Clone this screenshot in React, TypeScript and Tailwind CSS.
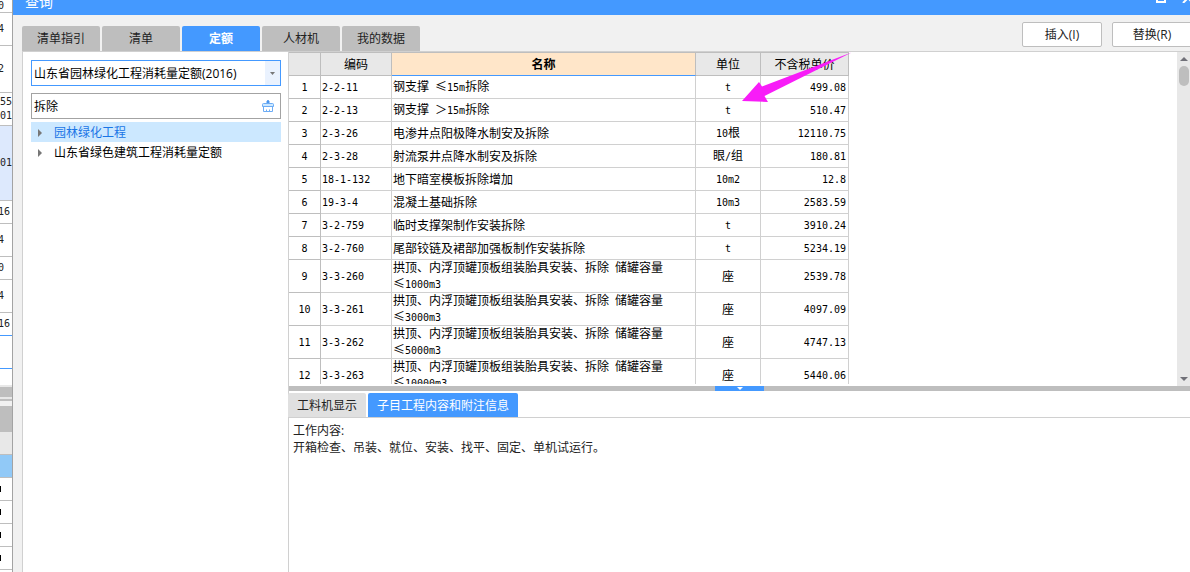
import React from "react";
import { clsx } from "clsx";

const tabs = ["清单指引", "清单", "定额", "人材机", "我的数据"];

const rows = [
  { code: "2-2-11", name: "钢支撑 ≤15m拆除", unit: "t", price: "499.08" },
  { code: "2-2-13", name: "钢支撑 ＞15m拆除", unit: "t", price: "510.47" },
  { code: "2-3-26", name: "电渗井点阳极降水制安及拆除", unit: "10根", price: "12110.75" },
  { code: "2-3-28", name: "射流泵井点降水制安及拆除", unit: "眼/组", price: "180.81" },
  { code: "18-1-132", name: "地下暗室模板拆除增加", unit: "10m2", price: "12.8" },
  { code: "19-3-4", name: "混凝土基础拆除", unit: "10m3", price: "2583.59" },
  { code: "3-2-759", name: "临时支撑架制作安装拆除", unit: "t", price: "3910.24" },
  { code: "3-2-760", name: "尾部铰链及裙部加强板制作安装拆除", unit: "t", price: "5234.19" },
  { code: "3-3-260", name: "拱顶、内浮顶罐顶板组装胎具安装、拆除 储罐容量", size: "≤1000m3", unit: "座", price: "2539.78" },
  { code: "3-3-261", name: "拱顶、内浮顶罐顶板组装胎具安装、拆除 储罐容量", size: "≤3000m3", unit: "座", price: "4097.09" },
  { code: "3-3-262", name: "拱顶、内浮顶罐顶板组装胎具安装、拆除 储罐容量", size: "≤5000m3", unit: "座", price: "4747.13" },
  { code: "3-3-263", name: "拱顶、内浮顶罐顶板组装胎具安装、拆除 储罐容量", size: "≤10000m3", unit: "座", price: "5440.06" },
];

// rows of the sheet behind the dialog, only their right edge shows
const sheetRows = [
  { text: "0", className: "h-[13px] border-[#bebebe] justify-end pr-2" },
  { text: "4", className: "h-[33px] border-[#bebebe] justify-end pr-2" },
  { text: "2", className: "h-[47px] border-[#bebebe] justify-end pr-2" },
  { text: "55\n010", className: "h-[33px] border-[#bebebe] justify-start" },
  { text: "01", className: "h-[75px] border-[#bebebe] justify-end bg-[#dde9fd]" },
  { text: "16", className: "h-[23px] border-[#bebebe] justify-end pr-0.5" },
  { text: "4", className: "h-[33px] border-[#bebebe] justify-end pr-2" },
  { text: "0", className: "h-[23px] border-[#bebebe] justify-end pr-2" },
  { text: "4", className: "h-[33px] border-[#bebebe] justify-end pr-2" },
  { text: "16", className: "h-[23px] border-[#4499ff] justify-end pr-0.5" },
  { text: "", className: "h-[33px] border-[#4499ff]" },
];

// half width characters take half the width of a Chinese one
const Mixed = ({ text }: { text: string }) => (
  <>
    {text.split(/([\x20-\x7e]+)/).map((part, i) =>
      i % 2 ? (
        <span key={i} className="font-['DejaVu_Sans_Mono',monospace] text-[10px] whitespace-pre">
          {part}
        </span>
      ) : (
        part
      )
    )}
  </>
);

const Sheet = () => (
  <aside className="w-[13px] shrink-0 overflow-hidden border-r border-[#a3a3a3] bg-white font-['DejaVu_Sans_Mono',monospace] text-[10px] leading-[14px] text-[#222]">
    {sheetRows.map((row, i) => (
      <div
        key={i}
        className={clsx("flex items-center overflow-hidden border-b whitespace-pre", row.className)}
      >
        {row.text}
      </div>
    ))}
    <div className="h-4" />
    <div className="h-0.5 bg-[#e8e8e8]" />
    <div className="h-2.5 bg-[#bebebe]" />
    <div className="h-0.5 bg-[#e8e8e8]" />
    <div className="h-0.5 bg-[#bebebe]" />
    <div className="h-[5px] bg-[#f1f1f1]" />
    <div className="h-[26px] bg-[#bebebe]" />
    <div className="h-[23px] border-b border-[#bebebe] bg-[#e8e8e8]" />
    <div className="h-[23px] border-b border-[#bebebe] bg-[#91c9f7]" />
    {[1, 2, 3, 4].map((n) => (
      <div key={n} className="flex h-[23px] items-center border-b border-[#bebebe]">
        <div className="h-1.5 w-px bg-black" />
      </div>
    ))}
  </aside>
);

const TitleBar = () => (
  <header className="flex h-[15px] shrink-0 items-end justify-between overflow-hidden bg-[#4499ff] pl-3 text-white">
    <h1 className="text-sm leading-[27px]">查询</h1>
    <div className="flex gap-4">
      <button aria-label="最大化" className="mb-3 h-2.5 w-2.5 shrink-0 border-2 border-white" />
      <button aria-label="关闭" className="-mr-1 mb-3 shrink-0">
        <svg width="12" height="10" viewBox="0 0 12 10" stroke="#fff" strokeWidth="2">
          <path d="M1 0l10 10M11 0L1 10" />
        </svg>
      </button>
    </div>
  </header>
);

const Toolbar = () => (
  <div className="flex h-9 shrink-0 items-end justify-between">
    <div role="tablist" className="flex gap-0.5">
      {tabs.map((tab) => (
        <button
          key={tab}
          role="tab"
          aria-selected={tab === "定额"}
          className={clsx(
            "h-[25px] w-[78px] rounded-t-xs whitespace-nowrap",
            tab === "定额" ? "bg-[#4499ff] font-bold text-white" : "bg-[#bebebe] text-[#222]"
          )}
        >
          {tab}
        </button>
      ))}
    </div>
    <div className="-mr-0.5 flex gap-2.5 pb-1">
      <button className="h-[25px] w-20 rounded-xs border border-[#bebebe] bg-white">插入(I)</button>
      <button className="h-[25px] w-20 rounded-xs border border-[#bebebe] bg-white">替换(R)</button>
    </div>
  </div>
);

const TreeItem = ({ label, selected }: { label: string; selected?: boolean }) => (
  <li>
    <button
      className={clsx(
        "flex h-5 w-full items-center gap-3 pt-px pl-[7px]",
        selected ? "bg-[#cce8ff] text-[#1a75e6]" : "text-black"
      )}
    >
      <svg width="4" height="8" viewBox="0 0 4 8" className="fill-[#777]">
        <path d="M0 0l4 4-4 4z" />
      </svg>
      {label}
    </button>
  </li>
);

const Sidebar = () => (
  <div className="w-[265px] shrink-0 px-2 pt-2">
    <div className="relative -mr-px">
      <select
        aria-label="定额库"
        className="block h-[26px] w-full appearance-none border border-[#4499ff] bg-white pt-px pl-0.5 text-black"
      >
        <option>山东省园林绿化工程消耗量定额(2016)</option>
      </select>
      <div className="pointer-events-none absolute inset-y-px right-px flex w-[15px] items-center justify-center bg-[#eaf2fe]">
        <svg width="5" height="3" viewBox="0 0 5 3" className="fill-[#777]">
          <path d="M0 0h5L2.5 3z" />
        </svg>
      </div>
    </div>
    <div className="mt-[7px] -mr-px flex h-[26px] items-center border border-[#a3a3a3] pr-1.5 pl-0.5">
      <input aria-label="搜索" defaultValue="拆除" className="min-w-0 flex-1 pt-px text-black outline-none" />
      <button aria-label="清空">
        <svg width="12" height="12" viewBox="0 0 12 12" fill="none" stroke="#4a96ee">
          <path d="M5 3.500v-2.500q1-1 2 0v2.500" fill="#4a96ee" />
          <path d="M.5 6.500v-2q0-1 1-1h9q1 0 1 1v2z" fill="#cce8ff" stroke="#6dacf5" />
          <path d="M1.500 6.500v5h9v-5M4.500 9.500v2M7.500 9.500v2" stroke="#6dacf5" />
        </svg>
      </button>
    </div>
    <ul className="-mr-px pt-[3px]">
      <TreeItem label="园林绿化工程" selected />
      <TreeItem label="山东省绿色建筑工程消耗量定额" />
    </ul>
  </div>
);

const QuotaTable = () => (
  <table className="w-[560px] table-fixed border-separate border-spacing-0 font-['Noto_Sans_CJK_SC',sans-serif] leading-[14px] text-black">
    <colgroup>
      <col className="w-8" />
      <col className="w-[71px]" />
      <col className="w-[304px]" />
      <col className="w-[65px]" />
      <col className="w-[88px]" />
    </colgroup>
    <thead>
      <tr className="h-6 bg-[#e8e8e8] *:border-t *:border-r *:border-b *:border-[#bebebe] *:p-0 *:font-normal">
        <th aria-label="序号" />
        <th>编码</th>
        <th className="border-b-[#4499ff]! bg-[#ffe6c9] font-bold!">名称</th>
        <th>单位</th>
        <th>不含税单价</th>
      </tr>
    </thead>
    <tbody>
      {rows.map((row, i) => (
        <tr
          key={row.code}
          className={clsx("*:border-r *:border-b *:border-[#d0d0d0] *:p-0", row.size ? "h-[33px]" : "h-[23px]")}
        >
          <td className="border-[#bebebe]! text-center">
            <Mixed text={String(i + 1)} />
          </td>
          <td className="pl-px!">
            <Mixed text={row.code} />
          </td>
          <td className="pl-px! whitespace-nowrap">
            <Mixed text={row.name} />
            {row.size && (
              <div>
                <Mixed text={row.size} />
              </div>
            )}
          </td>
          <td className="text-center">
            <Mixed text={row.unit} />
          </td>
          <td className="pr-0.5! text-right">
            <Mixed text={row.price} />
          </td>
        </tr>
      ))}
    </tbody>
  </table>
);

const ScrollBar = () => (
  <div className="flex w-[13px] shrink-0 flex-col items-center justify-between bg-[#e8e8e8] py-[5px]">
    <div className="flex flex-col items-center gap-[5px]">
      <svg width="8" height="4" viewBox="0 0 8 4" className="fill-[#707078]">
        <path d="M4 0l4 4H0z" />
      </svg>
      <div className="h-5 w-2.5 rounded-full bg-[#bebebe]" />
    </div>
    <svg width="8" height="4" viewBox="0 0 8 4" className="fill-[#707078]">
      <path d="M0 0h8L4 4z" />
    </svg>
  </div>
);

const Details = () => (
  <section className="flex min-h-0 flex-[181] flex-col">
    <div role="tablist" className="-ml-px flex gap-0.5 border-b border-[#d0d0d0] pt-0.5">
      <button role="tab" className="h-6 w-[78px] rounded-t-xs bg-[#e0e0e0] pt-px">
        工料机显示
      </button>
      <button role="tab" aria-selected className="h-6 w-[150px] rounded-t-xs bg-[#4499ff] pt-px text-white">
        子目工程内容和附注信息
      </button>
    </div>
    <div className="px-1 pt-1 leading-[17px]">
      <p>工作内容:</p>
      <p>开箱检查、吊装、就位、安装、找平、固定、单机试运行。</p>
    </div>
  </section>
);

const App = () => {
  return (
    <div className="flex h-screen overflow-hidden bg-[#f1f1f1] font-['Open_Sans','Noto_Sans_CJK_SC',sans-serif] text-xs text-[#222]">
      <Sheet />
      <div className="flex min-w-0 flex-1 flex-col">
        <TitleBar />
        <div className="flex min-h-0 flex-1 flex-col pl-[9px]">
          <Toolbar />
          <div className="flex min-h-0 flex-1 border-t border-l border-[#d0d0d0] bg-white">
            <Sidebar />
            <main className="flex min-w-0 flex-1 flex-col border-l border-[#d0d0d0]">
              <div className="flex min-h-0 flex-[334]">
                <div className="relative mb-0.5 min-w-0 flex-1 overflow-hidden">
                  <QuotaTable />
                  <svg
                    className="pointer-events-none absolute top-0 left-[453px] fill-[#f81cf8]"
                    width="110"
                    height="51"
                    viewBox="0 0 110 51"
                  >
                    <path d="M0 49L17 30l3 4.500L109.500 0.500 22.500 44l3.500 6z" />
                  </svg>
                </div>
                <ScrollBar />
              </div>
              <div className="flex h-[5px] shrink-0 justify-center bg-[#bebebe]">
                <button aria-label="收起" className="flex w-[49px] items-center justify-center bg-[#4499ff]">
                  <svg width="6" height="3" viewBox="0 0 6 3" className="fill-white">
                    <path d="M0 0h6L3 3z" />
                  </svg>
                </button>
              </div>
              <Details />
            </main>
          </div>
        </div>
      </div>
    </div>
  );
};

export default App;
